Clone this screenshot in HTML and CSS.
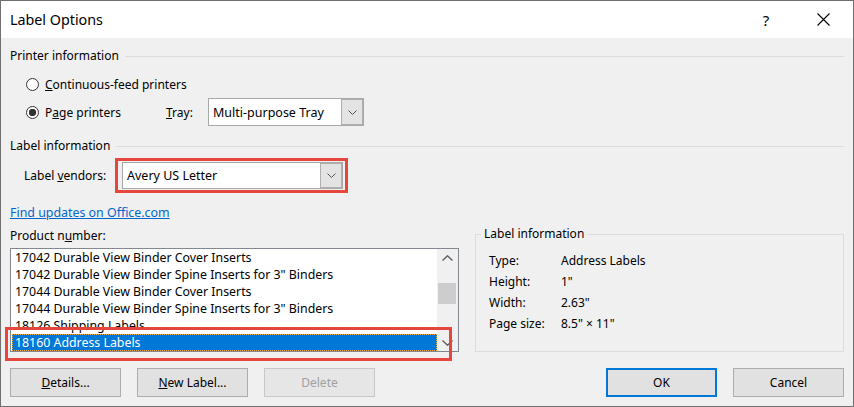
FILE: index.html
```html
<!DOCTYPE html>
<html lang="en">
  <head>
    <meta charset="UTF-8" />
    <title>Label Options</title>
    <link rel="stylesheet" href="styles.css">
  </head>
  <body>
    <div class="dialog">
      <div class="titlebar">
        <span class="title">Label Options</span>
        <span class="help">?</span>
        <span class="close">
          <svg width="13" height="13" viewBox="0 0 13 13"><path d="M0.5 0.5 L12.5 12.5 M12.5 0.5 L0.5 12.5" stroke="#000" stroke-width="1.1" fill="none"/></svg>
        </span>
      </div>

      <div class="content">
        <div class="group-head"><span>Printer information</span></div>

        <div class="opt-row first">
          <span class="radio"></span>
          <span><u>C</u>ontinuous-feed printers</span>
        </div>
        <div class="opt-row">
          <span class="radio checked"></span>
          <span class="page-label">P<u>a</u>ge printers</span>
          <span class="tray-label"><u>T</u>ray:</span>
          <div class="combo tray">
            <span class="combo-text">Multi-purpose Tray</span>
            <span class="combo-btn">
              <svg width="9" height="5" viewBox="0 0 9 5"><polyline points="0.5,0.5 4.5,4.5 8.5,0.5" stroke="#555" fill="none"/></svg>
            </span>
          </div>
        </div>

        <div class="group-head second"><span>Label information</span></div>

        <div class="vendor-row">
          <span class="vendor-label">Label <u>v</u>endors:</span>
          <div class="highlight">
            <div class="combo vendor">
              <span class="combo-text">Avery US Letter</span>
              <span class="combo-btn">
                <svg width="9" height="5" viewBox="0 0 9 5"><polyline points="0.5,0.5 4.5,4.5 8.5,0.5" stroke="#555" fill="none"/></svg>
              </span>
            </div>
          </div>
        </div>

        <a class="link" href="#">Find updates on Office.com</a>

        <div class="lower">
          <div class="product">
            <div class="field-label">Product n<u>u</u>mber:</div>
            <div class="listbox">
              <ul class="items">
                <li>17042 Durable View Binder Cover Inserts</li>
                <li>17042 Durable View Binder Spine Inserts for 3" Binders</li>
                <li>17044 Durable View Binder Cover Inserts</li>
                <li>17044 Durable View Binder Spine Inserts for 3" Binders</li>
                <li>18126 Shipping Labels</li>
                <li class="selected">18160 Address Labels</li>
              </ul>
              <div class="scrollbar">
                <span class="arrow">
                  <svg width="11" height="6" viewBox="0 0 11 6"><polyline points="0.5,5.5 5.5,0.8 10.5,5.5" stroke="#606060" stroke-width="1.4" fill="none"/></svg>
                </span>
                <div class="track"><div class="thumb"></div></div>
                <span class="arrow">
                  <svg width="11" height="6" viewBox="0 0 11 6"><polyline points="0.5,0.5 5.5,5.2 10.5,0.5" stroke="#606060" stroke-width="1.4" fill="none"/></svg>
                </span>
              </div>
              <div class="mark"></div>
            </div>
          </div>

          <fieldset class="info-frame">
            <legend>Label information</legend>
            <div class="info-grid">
              <span>Type:</span><span>Address Labels</span>
              <span>Height:</span><span>1"</span>
              <span>Width:</span><span>2.63"</span>
              <span>Page size:</span><span>8.5" &times; 11"</span>
            </div>
          </fieldset>
        </div>

        <div class="buttons">
          <div class="btn-group">
            <button class="btn"><u>D</u>etails...</button>
            <button class="btn"><u>N</u>ew Label...</button>
            <button class="btn" disabled>Delete</button>
          </div>
          <div class="btn-group">
            <button class="btn default">OK</button>
            <button class="btn">Cancel</button>
          </div>
        </div>
      </div>
    </div>
  </body>
</html>
```

FILE: styles.css
```css
* {
  box-sizing: border-box;
}

body {
  margin: 0;
  background: #f0f0f0;
}

.dialog {
  width: 854px;
  height: 407px;
  border: 1px solid #707070;
  background: #f0f0f0;
  font-family: "Segoe UI", "Noto Sans", "Open Sans", sans-serif;
  font-size: 12px;
  color: #000;
  overflow: hidden;
}

.titlebar {
  height: 37px;
  background: #fff;
  display: flex;
  align-items: center;
  padding-left: 9px;
}

.title {
  font-size: 14.3px;
  flex: 1;
}

.help,
.close {
  width: 46px;
  display: flex;
  justify-content: center;
  font-size: 15px;
}

.close {
  margin-left: 11px;
  margin-right: 7px;
}

.content {
  padding: 10px 9px 0;
}

.group-head {
  display: flex;
  align-items: center;
  height: 16px;
  line-height: 16px;
}

.group-head::after {
  content: "";
  flex: 1;
  border-top: 1px solid #dcdcdc;
  margin-left: 6px;
}

.group-head.second {
  margin-top: 12px;
}

.opt-row {
  display: flex;
  align-items: center;
  height: 28px;
  padding-left: 16px;
}

.opt-row.first {
  margin-top: 6px;
}

.radio {
  width: 13px;
  height: 13px;
  border: 1px solid #333;
  border-radius: 50%;
  background: #fff;
  margin-right: 6px;
}

.radio.checked {
  background: radial-gradient(circle, #333 0 3.4px, #fff 4px);
}

.page-label {
  width: 121px;
}

.tray-label {
  width: 42px;
}

.combo {
  display: flex;
  background: #fff;
  border: 1px solid #a8a8a8;
}

.combo.tray {
  width: 156px;
  height: 28px;
}

.combo.vendor {
  width: 221px;
  height: 27px;
}

.combo-text {
  flex: 1;
  display: flex;
  align-items: center;
  padding-left: 4px;
  font-size: 12.5px;
}

.combo-btn {
  width: 22px;
  display: flex;
  align-items: center;
  justify-content: center;
  background: #e3e3e3;
  border: 1px solid #b0b0b0;
}

.vendor-row {
  display: flex;
  align-items: center;
  margin-top: 4px;
  padding-left: 14px;
}

.vendor-label {
  width: 91px;
}

.highlight {
  border: 3px solid #e5473d;
  padding: 1px 2px 1px 4px;
}

.link {
  display: block;
  width: fit-content;
  margin-top: 12px;
  line-height: 16px;
  font-size: 12.4px;
  color: #0066cc;
}

.lower {
  display: flex;
  gap: 16px;
  margin-top: 7px;
}

.product {
  width: 449px;
}

.field-label {
  line-height: 16px;
  margin-bottom: 4px;
}

.listbox {
  position: relative;
  display: flex;
  height: 104px;
  border: 1px solid #828790;
  background: #fff;
}

.items {
  list-style: none;
  margin: 0;
  padding: 0;
  flex: 1;
  font-size: 12.35px;
}

.items li {
  height: 17px;
  line-height: 17px;
  margin-left: 1px;
  padding-left: 3px;
  white-space: nowrap;
}

.items li.selected {
  background: #0078d7;
  color: #fff;
  outline: 1px dotted #f2a53a;
  outline-offset: -1px;
}

.scrollbar {
  width: 21px;
  background: #f0f0f0;
  display: flex;
  flex-direction: column;
}

.arrow {
  height: 17px;
  display: flex;
  align-items: center;
  justify-content: center;
}

.track {
  flex: 1;
}

.thumb {
  margin: 17px 2px 0 1px;
  height: 21px;
  background: #cdcdcd;
}

.mark {
  position: absolute;
  left: -6px;
  top: 78px;
  width: 447px;
  height: 34px;
  border: 3px solid #e5473d;
  pointer-events: none;
}

.info-frame {
  flex: 1;
  margin: -2px 0 0;
  padding: 8px 12px 14px 13px;
  border: 1px solid #dcdcdc;
  min-width: 0;
}

.info-frame legend {
  padding: 0 3px;
  margin-left: -8px;
  line-height: 16px;
}

.info-grid {
  display: grid;
  grid-template-columns: 72px auto;
  line-height: 21px;
}

.buttons {
  display: flex;
  justify-content: space-between;
  margin-top: 16px;
}

.btn-group {
  display: flex;
  gap: 16px;
}

.btn {
  width: 111px;
  height: 29px;
  padding: 0;
  border: 1px solid #adadad;
  background: #e1e1e1;
  font-family: inherit;
  font-size: 12px;
  color: #000;
}

.btn.default {
  border: 2px solid #0078d7;
}

.btn:disabled {
  color: #a0a0a0;
  background: #e6e6e6;
  border-color: #c8c8c8;
}
```
